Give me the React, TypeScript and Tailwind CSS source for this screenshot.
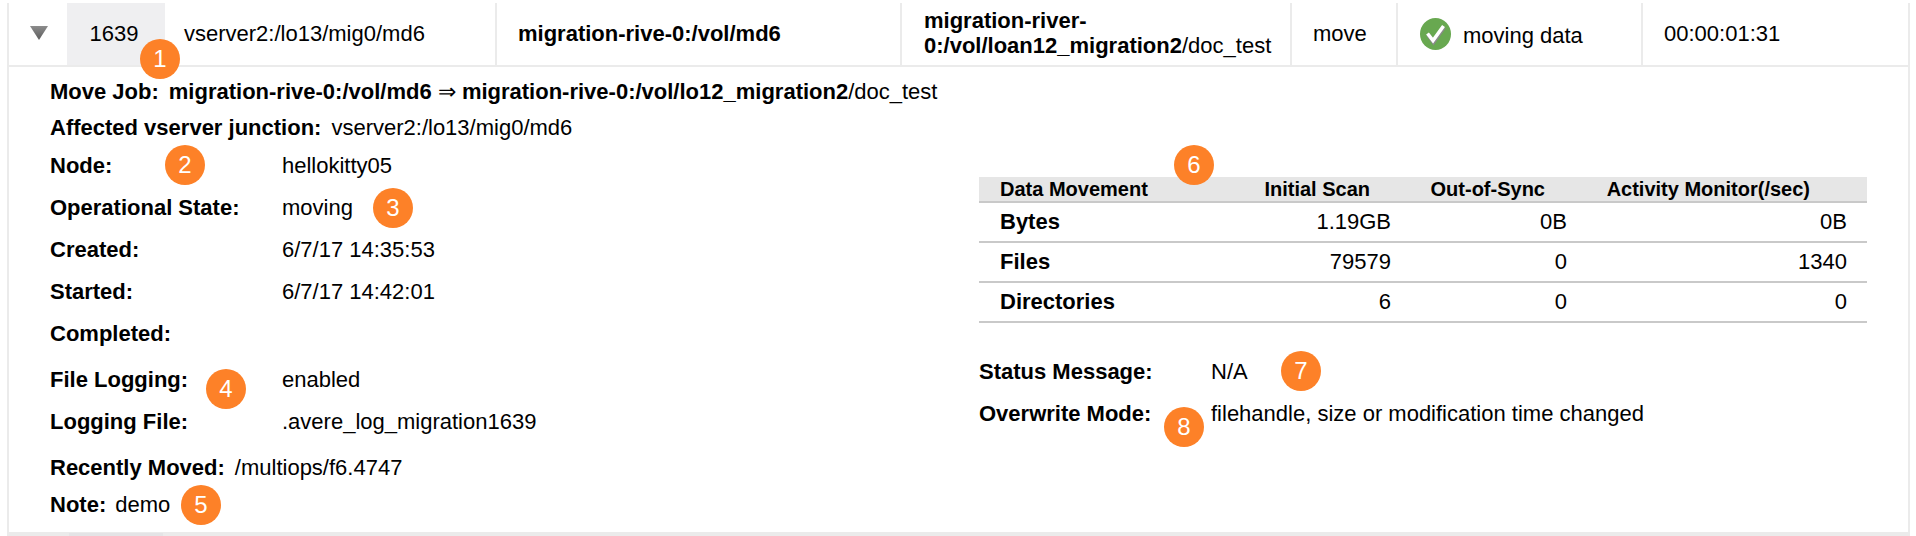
type BadgeProps = { n: number; className: string };

function Badge({ n, className }: BadgeProps) {
  return (
    <span className={`absolute flex h-10 w-10 items-center justify-center rounded-full bg-[#fd8128] text-[24px] font-medium text-white ${className}`}>
      {n}
    </span>
  );
}

function Field({ label, children, className = "" }: { label: string; children?: React.ReactNode; className?: string }) {
  return (
    <div className={`flex h-6 items-center leading-6 ${className}`}>
      <span className="w-[232px] shrink-0 font-bold">{label}</span>
      <span>{children}</span>
    </div>
  );
}

const rows = [
  { name: "Bytes", scan: "1.19GB", sync: "0B", monitor: "0B" },
  { name: "Files", scan: "79579", sync: "0", monitor: "1340" },
  { name: "Directories", scan: "6", sync: "0", monitor: "0" },
];

export default function App() {
  return (
    <div className="relative h-[536px] w-[1916px] overflow-hidden bg-white pt-[3px] text-[22px] text-black [font-family:'Liberation_Sans',Arial,sans-serif]">
      {/* Job row and details */}
      <div className="ml-[7px] h-[533px] w-[1903px] border-x-2 border-b-4 border-[#ebebeb]">
        <div className="flex h-[64px] border-b-2 border-[#ebebeb]">
          <div className="flex w-[58px] items-center justify-center pb-[2px] pl-[2px]">
            <svg width="18" height="14" viewBox="0 0 18 14">
              <defs>
                <linearGradient id="arrow" x1="0" y1="0" x2="0" y2="1">
                  <stop offset="0" stopColor="#8c8c8c" />
                  <stop offset="1" stopColor="#5c5c5c" />
                </linearGradient>
              </defs>
              <path d="M0 0H18L9 14Z" fill="url(#arrow)" />
            </svg>
          </div>
          <div className="flex w-[98px] items-center justify-center bg-[#efeff1] pr-[4px] pb-[2px]">1639</div>
          <div className="flex w-[332px] items-center border-r-2 border-[#ebebeb] pb-[2px] pl-[19px]">vserver2:/lo13/mig0/md6</div>
          <div className="flex w-[405px] items-center border-r-2 border-[#ebebeb] pb-[2px] pl-[21px] font-bold">migration-rive-0:/vol/md6</div>
          <div className="flex w-[390px] items-center border-r-2 border-[#ebebeb] pb-[2px] pl-[22px] leading-[25px]">
            <span>
              <b>migration-river-</b>
              <br />
              <b>0:/vol/loan12_migration2</b>/doc_test
            </span>
          </div>
          <div className="flex w-[106px] items-center border-r-2 border-[#ebebeb] pb-[2px] pl-[21px]">move</div>
          <div className="flex w-[245px] items-center gap-[12px] border-r-2 border-[#ebebeb] pl-[22px]">
            <svg width="31" height="32" viewBox="0 0 31 32">
              <ellipse cx="15.5" cy="16" rx="15.5" ry="16" fill="#68a850" />
              <path d="M8 16.5L13.5 24L24 9" fill="none" stroke="#8a8a8a" strokeWidth="4" />
              <path d="M7.5 15.5L13 22.5L23.5 8" fill="none" stroke="#ffffff" strokeWidth="3.5" />
            </svg>
            <span className="pt-[2px]">moving data</span>
          </div>
          <div className="flex flex-1 items-center pb-[2px] pl-[21px]">00:00:01:31</div>
        </div>

        <div className="pl-[41px]">
          <div className="mt-[13px] flex h-6 items-center gap-[10px] leading-6">
            <span className="font-bold">Move Job:</span>
            <span>
              <b>migration-rive-0:/vol/md6</b> ⇒ <b>migration-rive-0:/vol/lo12_migration2</b>/doc_test
            </span>
          </div>
          <div className="mt-[12px] flex h-6 items-center gap-[10px] leading-6">
            <span className="font-bold">Affected vserver junction:</span>
            <span>vserver2:/lo13/mig0/md6</span>
          </div>

          <div className="mt-[14px] flex">
            <div className="w-[929px]">
              <Field label="Node:">hellokitty05</Field>
              <Field label="Operational State:" className="mt-[18px]">moving</Field>
              <Field label="Created:" className="mt-[18px]">6/7/17 14:35:53</Field>
              <Field label="Started:" className="mt-[18px]">6/7/17 14:42:01</Field>
              <Field label="Completed:" className="mt-[18px]" />
              <Field label="File Logging:" className="mt-[22px]">enabled</Field>
              <Field label="Logging File:" className="mt-[18px]">.avere_log_migration1639</Field>
              <div className="mt-[22px] flex h-6 items-center gap-[10px] leading-6">
                <span className="font-bold">Recently Moved:</span>
                <span>/multiops/f6.4747</span>
              </div>
              <div className="mt-[13px] flex h-6 items-center gap-[9px] leading-6">
                <span className="font-bold">Note:</span>
                <span>demo</span>
              </div>
            </div>

            <div className="w-[888px] pt-[23px]">
              <div className="grid h-[26px] grid-cols-[200px_231px_177px_280px] items-center border-b-2 border-[#c9c9c9] bg-[#e6e6e6] text-[20px] leading-6 font-bold">
                <span className="pl-[21px]">Data Movement</span>
                <span className="pr-[40px] text-right">Initial Scan</span>
                <span className="pr-[42px] text-right">Out-of-Sync</span>
                <span className="pr-[57px] text-right">Activity Monitor(/sec)</span>
              </div>
              {rows.map((row) => (
                <div key={row.name} className="grid h-10 grid-cols-[200px_231px_177px_280px] items-center border-b-2 border-[#c9c9c9] leading-6">
                  <span className="pl-[21px] font-bold">{row.name}</span>
                  <span className="pr-[19px] text-right">{row.scan}</span>
                  <span className="pr-[20px] text-right">{row.sync}</span>
                  <span className="pr-[20px] text-right">{row.monitor}</span>
                </div>
              ))}
              <Field label="Status Message:" className="mt-[37px]">N/A</Field>
              <Field label="Overwrite Mode:" className="mt-[18px]">filehandle, size or modification time changed</Field>
            </div>
          </div>
        </div>
      </div>

      {/* Top edge of the next row's id cell */}
      <div className="absolute top-[533px] left-[69px] h-[3px] w-[94px] bg-[#e4e4e6]" />

      <Badge n={1} className="top-[39px] left-[140px]" />
      <Badge n={2} className="top-[145px] left-[165px]" />
      <Badge n={3} className="top-[188px] left-[373px]" />
      <Badge n={4} className="top-[369px] left-[206px]" />
      <Badge n={5} className="top-[485px] left-[181px]" />
      <Badge n={6} className="top-[145px] left-[1174px]" />
      <Badge n={7} className="top-[351px] left-[1281px]" />
      <Badge n={8} className="top-[407px] left-[1164px]" />
    </div>
  );
}
